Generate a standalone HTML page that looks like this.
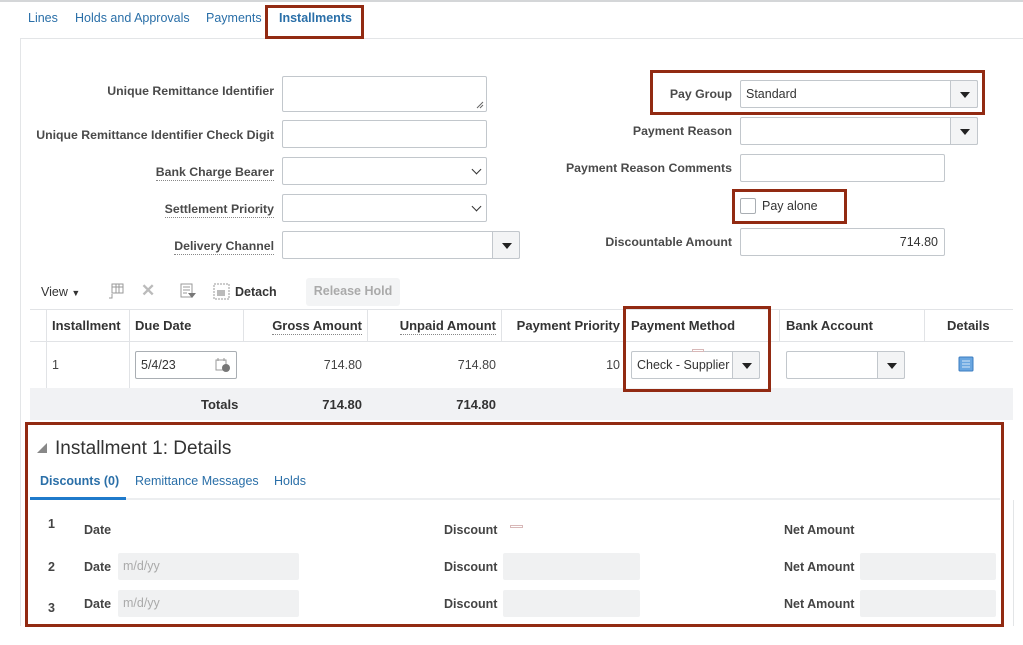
<!DOCTYPE html>
<html><head><meta charset="utf-8"><style>
*{box-sizing:border-box;margin:0;padding:0}
body{width:1023px;height:645px;background:#fff;font-family:"Liberation Sans",Arial,sans-serif;position:relative;overflow:hidden;color:#333}
.a{position:absolute}
.lbl{position:absolute;font-size:12.3px;font-weight:bold;color:#4a4a4a;text-align:right;white-space:nowrap}
.u{border-bottom:1px dotted #888;padding-bottom:1px}
.inp{position:absolute;border:1px solid #c2c7cc;border-radius:2px;background:#fff;height:28px;font-size:12.5px;color:#333;padding:6px 5px}
.btn{position:absolute;top:-1px;right:-1px;width:28px;height:28px;border:1px solid #c2c7cc;background:#f3f4f5;border-radius:0 2px 2px 0}
.btn:after{content:"";position:absolute;left:9px;top:11px;border-left:5px solid transparent;border-right:5px solid transparent;border-top:6px solid #222}
.chev{position:absolute;right:6px;top:8px;width:7px;height:7px;border-right:1.5px solid #333;border-bottom:1.5px solid #333;transform:rotate(45deg)}
.red{position:absolute;border:3px solid #922a12;z-index:5}
.tab{position:absolute;top:11px;font-size:12.5px;color:#2a6fa8}
.th{position:absolute;top:318px;font-size:13px;font-weight:bold;color:#333;white-space:nowrap}
.vl{position:absolute;width:1px;background:#e1e3e6}
.num{position:absolute;font-size:12.5px;color:#444;text-align:right;white-space:nowrap}
.dis{position:absolute;background:#f0f1f2;border-radius:2px;height:27px;font-size:12.5px;color:#aaa;padding:6px 5px}
.dl{position:absolute;font-size:12.5px;font-weight:bold;color:#444}
</style></head><body>
<div class="a" style="left:0;top:0;width:1023px;height:2px;background:#d4d6d8"></div>
<div class="tab" style="left:28px">Lines</div>
<div class="tab" style="left:75px">Holds and Approvals</div>
<div class="tab" style="left:206px">Payments</div>
<div class="tab" style="left:279px;font-weight:bold">Installments</div>
<div class="red" style="left:265px;top:5px;width:99px;height:34px"></div>
<div class="a" style="left:20px;top:38px;width:1003px;height:1px;background:#e3e5e7"></div>
<div class="a" style="left:20px;top:38px;width:1px;height:588px;background:#e3e5e7"></div>
<div class="a" style="left:1013px;top:500px;width:1px;height:126px;background:#e3e5e7"></div>

<div class="lbl" style="right:749px;top:84px">Unique Remittance Identifier</div>
<div class="inp" style="left:282px;top:76px;width:205px;height:36px"><svg class="a" style="right:2px;bottom:2px" width="8" height="8"><path d="M1 7L7 1M4 7L7 4" stroke="#666" stroke-width="1"/></svg></div>
<div class="lbl" style="right:749px;top:128px">Unique Remittance Identifier Check Digit</div>
<div class="inp" style="left:282px;top:120px;width:205px"></div>
<div class="lbl" style="right:749px;top:165px"><span class="u">Bank Charge Bearer</span></div>
<div class="inp" style="left:282px;top:157px;width:205px"><div class="chev"></div></div>
<div class="lbl" style="right:749px;top:202px"><span class="u">Settlement Priority</span></div>
<div class="inp" style="left:282px;top:194px;width:205px"><div class="chev"></div></div>
<div class="lbl" style="right:749px;top:239px"><span class="u">Delivery Channel</span></div>
<div class="inp" style="left:282px;top:231px;width:238px"><div class="btn"></div></div>

<div class="lbl" style="right:291px;top:87px">Pay Group</div>
<div class="inp" style="left:740px;top:80px;width:238px">Standard<div class="btn"></div></div>
<div class="red" style="left:650px;top:70px;width:335px;height:45px"></div>
<div class="lbl" style="right:291px;top:124px">Payment Reason</div>
<div class="inp" style="left:740px;top:117px;width:238px"><div class="btn"></div></div>
<div class="lbl" style="right:291px;top:161px">Payment Reason Comments</div>
<div class="inp" style="left:740px;top:154px;width:205px"></div>
<div class="a" style="left:740px;top:198px;width:16px;height:16px;border:1px solid #a9aeb3;border-radius:2px"></div>
<div class="a" style="left:762px;top:199px;font-size:12.5px;color:#333">Pay alone</div>
<div class="red" style="left:732px;top:189px;width:115px;height:35px"></div>
<div class="lbl" style="right:291px;top:235px">Discountable Amount</div>
<div class="inp" style="left:740px;top:228px;width:205px;text-align:right;padding-right:6px">714.80</div>

<div class="a" style="left:41px;top:285px;font-size:12.5px;color:#333">View <span style="font-size:9px">▼</span></div>
<svg class="a" style="left:108px;top:283px" width="17" height="17"><rect x="4" y="1" width="11" height="9" fill="none" stroke="#999"/><path d="M4 4h11M8 1v9M11 1v9M4 11v4h-3" stroke="#999" fill="none"/></svg>
<div class="a" style="left:141px;top:281px;font-size:17px;color:#bbb;font-weight:bold">✕</div>
<svg class="a" style="left:180px;top:283px" width="17" height="17"><rect x="1" y="1" width="11" height="13" fill="none" stroke="#999"/><path d="M3 4h7M3 7h7M3 10h4" stroke="#999"/><path d="M8 10h8l-4 5z" fill="#777"/></svg>
<svg class="a" style="left:213px;top:283px" width="17" height="17"><rect x="1" y="1" width="15" height="15" fill="none" stroke="#999" stroke-dasharray="2 1"/><rect x="4" y="7" width="8" height="6" fill="#bbb"/></svg>
<div class="a" style="left:235px;top:285px;font-size:12.5px;font-weight:bold;color:#333">Detach</div>
<div class="a" style="left:306px;top:278px;width:94px;height:28px;background:#f3f4f5;border-radius:3px;font-size:12.5px;font-weight:bold;color:#aaa;text-align:center;padding-top:6px">Release Hold</div>

<div class="a" style="left:30px;top:309px;width:983px;height:1px;background:#e1e3e6"></div>
<div class="a" style="left:30px;top:341px;width:983px;height:1px;background:#e1e3e6"></div>
<div class="vl" style="left:46px;top:309px;height:79px"></div>
<div class="vl" style="left:129px;top:309px;height:79px"></div>
<div class="vl" style="left:243px;top:309px;height:32px"></div>
<div class="vl" style="left:367px;top:309px;height:32px"></div>
<div class="vl" style="left:501px;top:309px;height:32px"></div>
<div class="vl" style="left:779px;top:309px;height:32px"></div>
<div class="vl" style="left:924px;top:309px;height:32px"></div>
<div class="th" style="left:52px">Installment</div>
<div class="th" style="left:135px">Due Date</div>
<div class="th" style="right:661px"><span class="u">Gross Amount</span></div>
<div class="th" style="right:527px"><span class="u">Unpaid Amount</span></div>
<div class="th" style="right:403px">Payment Priority</div>
<div class="th" style="left:631px">Payment Method</div>
<div class="th" style="left:786px">Bank Account</div>
<div class="th" style="left:947px">Details</div>
<div class="num" style="left:52px;top:358px">1</div>
<div class="inp" style="left:135px;top:351px;width:102px;border-color:#a9aeb3">5/4/23<svg class="a" style="right:5px;top:5px" width="16" height="16"><rect x="1" y="3" width="10" height="10" fill="none" stroke="#999"/><path d="M3 1v3M9 1v3" stroke="#999"/><circle cx="11" cy="11" r="4" fill="#777"/></svg></div>
<div class="num" style="right:661px;top:358px">714.80</div>
<div class="num" style="right:527px;top:358px">714.80</div>
<div class="num" style="right:403px;top:358px">10</div>
<div class="inp" style="left:631px;top:351px;width:129px;padding-left:5px">Check - Supplier<div class="btn"></div></div>
<div class="a" style="left:692px;top:349px;width:12px;height:3px;border:1px solid #d8b8b8"></div>
<div class="red" style="left:623px;top:306px;width:148px;height:86px"></div>
<div class="inp" style="left:786px;top:351px;width:119px"><div class="btn"></div></div>
<svg class="a" style="left:958px;top:356px" width="16" height="16"><rect x="1" y="1" width="14" height="14" rx="1" fill="#6aa6e0" stroke="#3b7cc0"/><path d="M4 5h8M4 8h8M4 11h8" stroke="#d7e8f8"/></svg>
<div class="a" style="left:30px;top:388px;width:983px;height:32px;background:#f1f2f4"></div>
<div class="th" style="left:201px;top:397px">Totals</div>
<div class="th" style="right:661px;top:397px">714.80</div>
<div class="th" style="right:527px;top:397px">714.80</div>

<div class="red" style="left:25px;top:422px;width:979px;height:205px"></div>
<div class="a" style="left:37px;top:443px;border-left:10px solid transparent;border-bottom:10px solid #888;width:0;height:0"></div>
<div class="a" style="left:55px;top:438px;font-size:19px;color:#333">Installment 1: Details</div>
<div class="a" style="left:40px;top:474px;font-size:12.5px;font-weight:bold;color:#2a6fa8">Discounts (0)</div>
<div class="a" style="left:135px;top:474px;font-size:12.5px;color:#2a6fa8">Remittance Messages</div>
<div class="a" style="left:274px;top:474px;font-size:12.5px;color:#2a6fa8">Holds</div>
<div class="a" style="left:30px;top:498px;width:970px;height:2px;background:#eceef0"></div>
<div class="a" style="left:30px;top:497px;width:96px;height:3px;background:#1f7acb"></div>
<div class="dl" style="left:48px;top:517px">1</div>
<div class="dl" style="left:48px;top:560px">2</div>
<div class="dl" style="left:48px;top:601px">3</div>
<div class="dl" style="left:84px;top:523px">Date</div>
<div class="dl" style="left:84px;top:560px">Date</div>
<div class="dl" style="left:84px;top:597px">Date</div>
<div class="dis" style="left:118px;top:553px;width:181px">m/d/yy</div>
<div class="dis" style="left:118px;top:590px;width:181px">m/d/yy</div>
<div class="dl" style="left:444px;top:523px">Discount</div>
<div class="dl" style="left:444px;top:560px">Discount</div>
<div class="dl" style="left:444px;top:597px">Discount</div>
<div class="a" style="left:510px;top:525px;width:13px;height:3px;border:1px solid #d8b8b8"></div>
<div class="dis" style="left:503px;top:553px;width:137px"></div>
<div class="dis" style="left:503px;top:590px;width:137px"></div>
<div class="dl" style="left:784px;top:523px">Net Amount</div>
<div class="dl" style="left:784px;top:560px">Net Amount</div>
<div class="dl" style="left:784px;top:597px">Net Amount</div>
<div class="dis" style="left:860px;top:553px;width:136px"></div>
<div class="dis" style="left:860px;top:590px;width:136px"></div>
</body></html>
